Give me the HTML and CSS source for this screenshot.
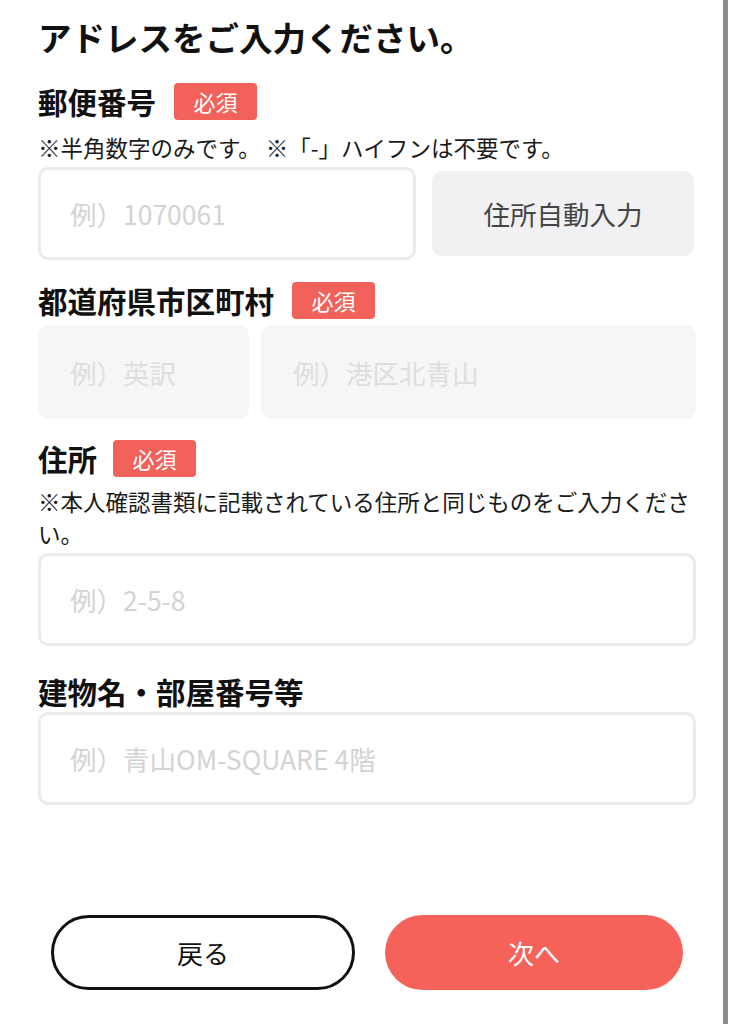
FILE: index.html
```html
<!doctype html>
<html lang="ja">
<head>
    <meta charset="UTF-8">
    <meta name="viewport" content="width=device-width, initial-scale=1.0">
    <title>アドレス入力</title>
    <link rel="stylesheet" href="styles.css">
</head>
<body>
    <div class="screen">
        <main class="page">
            <h1 class="title">アドレスをご入力ください。</h1>

            <!-- 郵便番号 -->
            <div class="field_head head_zip">
                <span class="field_label">郵便番号</span>
                <span class="badge">必須</span>
            </div>
            <p class="note note_zip">※半角数字のみです。 ※「-」ハイフンは不要です。</p>
            <div class="zip_row">
                <input type="text" class="text_input zip_input" placeholder="例）1070061">
                <button type="button" class="auto_btn">住所自動入力</button>
            </div>

            <!-- 都道府県市区町村 -->
            <div class="field_head head_pref">
                <span class="field_label">都道府県市区町村</span>
                <span class="badge">必須</span>
            </div>
            <div class="pref_row">
                <input type="text" class="text_input locked pref_input" placeholder="例）英訳" disabled>
                <input type="text" class="text_input locked city_input" placeholder="例）港区北青山" disabled>
            </div>

            <!-- 住所 -->
            <div class="field_head head_addr">
                <span class="field_label">住所</span>
                <span class="badge">必須</span>
            </div>
            <p class="note note_addr">※本人確認書類に記載されている住所と同じものをご入力ください。</p>
            <input type="text" class="text_input addr_input" placeholder="例）2-5-8">

            <!-- 建物名 -->
            <div class="field_head head_bldg">
                <span class="field_label">建物名・部屋番号等</span>
            </div>
            <input type="text" class="text_input bldg_input" placeholder="例）青山OM-SQUARE 4階">

            <div class="actions">
                <button type="button" class="btn btn_back">戻る</button>
                <button type="button" class="btn btn_next">次へ</button>
            </div>
        </main>
        <div class="edge"></div>
    </div>
</body>
</html>
```

FILE: styles.css
```css
*{
    padding:0;
    margin:0;
    box-sizing: border-box;
}
body{
    font-family: "Noto Sans CJK JP", "Noto Sans", sans-serif;
    color: #111;
    background: #fff;
}
.screen{
    display: flex;
    width: 731px;
    height: 1024px;
    padding-right: 3px;
}
.page{
    width: 723px;
    padding: 15px 27px 0 38px;
}
.edge{
    width: 5px;
    background: #8b8b8b;
}
.title{
    font-size: 33.5px;
    line-height: 44px;
    font-weight: 700;
    color: #111;
}

/* ラベル行 */
.field_head{
    display: flex;
    align-items: center;
    gap: 18px;
    height: 37px;
}
.field_label{
    font-size: 29.5px;
    line-height: 37px;
    font-weight: 700;
    color: #111;
}
.badge{
    width: 83px;
    height: 37px;
    line-height: 37px;
    text-align: center;
    font-size: 22px;
    color: #fff;
    background: #f2625a;
    border-radius: 4px;
}
.head_zip{ margin-top: 24px; }
.head_pref{ margin-top: 22px; }
.head_addr{ margin-top: 21px; gap: 16px; }
.head_bldg{ margin-top: 27px; }

.note{
    font-size: 22.5px;
    line-height: 32px;
    color: #1a1a1a;
}
.note_zip{ margin-top: 11px; }
.note_addr{ margin-top: 8px; }

/* 入力欄 */
.text_input{
    display: block;
    height: 93px;
    padding: 0 0 0 29px;
    font-family: inherit;
    font-size: 26.5px;
    color: #222;
    background: #fff;
    border: 3px solid #ebebeb;
    border-radius: 10px;
    outline: none;
}
.text_input::placeholder{
    color: #d3d3d3;
}
.locked{
    height: 94px;
    background: #f6f6f6;
    border-color: #f6f6f6;
}
.locked::placeholder{
    color: #dedede;
}

.zip_row{
    display: flex;
    align-items: center;
    gap: 16px;
    margin-top: 4px;
}
.zip_input{
    width: 378px;
}
.auto_btn{
    flex: 1;
    height: 85px;
    margin-right: 2px;
    font-family: inherit;
    font-size: 26.5px;
    color: #444;
    background: #f1f1f3;
    border: 0;
    border-radius: 10px;
}

.pref_row{
    display: flex;
    gap: 12px;
    margin-top: 6px;
}
.pref_input{
    width: 211px;
}
.city_input{
    flex: 1;
    min-width: 0;
}

.addr_input{
    width: 100%;
    margin-top: 4px;
}
.bldg_input{
    width: 100%;
    margin-top: 2px;
}

/* 下部ボタン */
.actions{
    display: flex;
    gap: 30px;
    margin-top: 110px;
    padding: 0 13px;
}
.btn{
    flex: 1;
    height: 75px;
    font-family: inherit;
    font-size: 26px;
    border-radius: 38px;
    cursor: pointer;
}
.btn_back{
    color: #111;
    background: #fff;
    border: 3px solid #111;
}
.btn_next{
    color: #fff;
    background: #f4625a;
    border: 0;
}
```
